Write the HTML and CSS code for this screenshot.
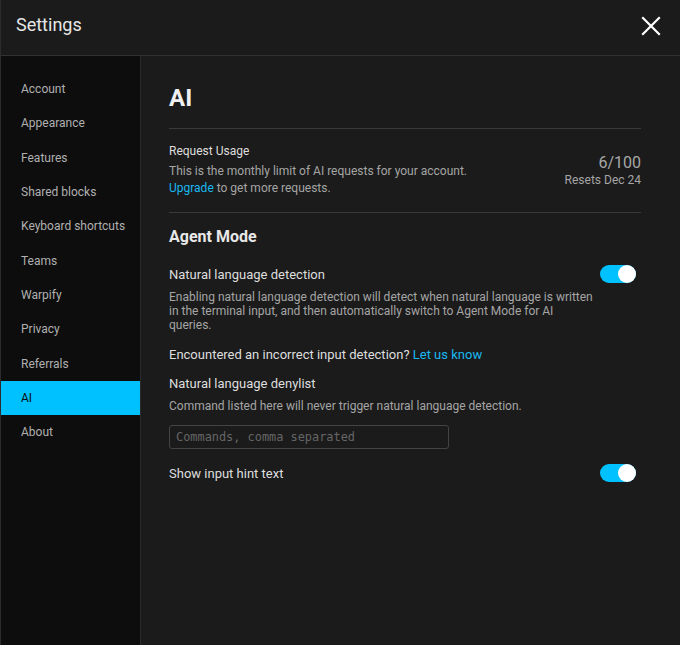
FILE: index.html
```html
<!DOCTYPE html>
<html>
<head>
<meta charset="utf-8">
<link rel="stylesheet" href="styles.css">
</head>
<body>
<div class="window">
  <header class="header">
    <div class="title">Settings</div>
    <svg class="close" width="20" height="20" viewBox="0 0 20 20"><path d="M2 2 L18 18 M18 2 L2 18" stroke="#fff" stroke-width="2.2" stroke-linecap="square"/></svg>
  </header>
  <div class="body">
    <nav class="sidebar">
      <div class="nav-item">Account</div>
      <div class="nav-item">Appearance</div>
      <div class="nav-item">Features</div>
      <div class="nav-item">Shared blocks</div>
      <div class="nav-item">Keyboard shortcuts</div>
      <div class="nav-item">Teams</div>
      <div class="nav-item">Warpify</div>
      <div class="nav-item">Privacy</div>
      <div class="nav-item">Referrals</div>
      <div class="nav-item active">AI</div>
      <div class="nav-item">About</div>
    </nav>
    <main class="content">
      <h1 class="page-title">AI</h1>
      <section class="usage">
        <div class="usage-left">
          <div class="label small-label">Request Usage</div>
          <div class="desc">This is the monthly limit of AI requests for your account.<br><span class="link">Upgrade</span> to get more requests.</div>
        </div>
        <div class="usage-right">
          <div class="count">6/100</div>
          <div class="resets">Resets Dec 24</div>
        </div>
      </section>
      <section class="agent">
        <h2 class="section-title">Agent Mode</h2>
        <div class="row">
          <div class="label">Natural language detection</div>
          <div class="toggle"><div class="knob"></div></div>
        </div>
        <div class="desc small wide">Enabling natural language detection will detect when natural language is written in the terminal input, and then automatically switch to Agent Mode for AI queries.</div>
        <div class="label encounter">Encountered an incorrect input detection? <span class="link">Let us know</span></div>
        <div class="label denylist">Natural language denylist</div>
        <div class="desc small">Command listed here will never trigger natural language detection.</div>
        <div class="input">Commands, comma separated</div>
        <div class="row hint">
          <div class="label">Show input hint text</div>
          <div class="toggle"><div class="knob"></div></div>
        </div>
      </section>
    </main>
  </div>
</div>
</body>
</html>
```

FILE: styles.css
```css
* { box-sizing: border-box; }
html, body { margin: 0; padding: 0; background: #1b1b1b; }
body {
  font-family: Roboto, "Liberation Sans", sans-serif;
  width: 680px;
  height: 645px;
  overflow: hidden;
}
.window {
  width: 680px;
  height: 645px;
  display: flex;
  flex-direction: column;
  background: #1b1b1b;
  border-left: 1px solid #2c2c2c;
}
.header {
  height: 56px;
  flex: none;
  display: flex;
  align-items: center;
  justify-content: space-between;
  padding: 0 19px 0 15px;
  border-bottom: 1px solid #323232;
}
.title {
  color: #e6e6e6;
  font-size: 18px;
  margin-top: -6px;
}
.close { display: block; margin-top: -3px; }
.body {
  flex: 1;
  display: flex;
  min-height: 0;
}
.sidebar {
  width: 140px;
  flex: none;
  background: #0d0d0d;
  border-right: 1px solid #2a2a2a;
  padding-top: 16px;
}
.nav-item {
  height: 34.3px;
  display: flex;
  align-items: center;
  padding-left: 20px;
  font-size: 12px;
  color: #b0b0b0;
}
.nav-item.active {
  background: #00c1ff;
  color: #0d0d0d;
}
.content {
  flex: 1;
  padding: 0 39px 0 28px;
}
.page-title {
  margin: 0;
  font-size: 24px;
  font-weight: 700;
  color: #f0f0f0;
  height: 73px;
  line-height: 30px;
  padding-top: 27px;
  border-bottom: 1px solid #3a3a3a;
}
.usage {
  display: flex;
  justify-content: space-between;
  align-items: center;
  padding: 14px 0 15px;
  border-bottom: 1px solid #3a3a3a;
}
.label {
  font-size: 13px;
  color: #dedede;
  line-height: 17px;
}
.label.small-label { font-size: 12px; }
.desc {
  font-size: 12px;
  color: #a5a5a5;
  line-height: 17px;
  margin-top: 3px;
}
.link { color: #19b8f0; }
.usage-right { text-align: right; margin-top: 2px; }
.count {
  font-size: 16px;
  color: #a8a8a8;
  line-height: 18px;
}
.resets {
  font-size: 12px;
  color: #a5a5a5;
  line-height: 16px;
}
.section-title {
  margin: 0;
  font-size: 16px;
  font-weight: 700;
  color: #e8e8e8;
  line-height: 20px;
  padding-top: 14px;
}
.row {
  display: flex;
  justify-content: space-between;
  align-items: center;
  margin-top: 18px;
  padding-right: 5px;
}
.desc.small {
  line-height: 14px;
  margin-top: 7px;
}
.desc.wide { padding-right: 45px; }
.toggle {
  width: 36px;
  height: 18px;
  border-radius: 9px;
  background: #00c1ff;
  position: relative;
}
.knob {
  position: absolute;
  right: 0;
  top: 0;
  width: 18px;
  height: 18px;
  border-radius: 50%;
  background: #fff;
}
.encounter { margin-top: 14px; }
.denylist { margin-top: 12px; }
.input {
  width: 280px;
  height: 24px;
  margin-top: 12px;
  border: 1px solid #444;
  border-radius: 3px;
  font-family: "DejaVu Sans Mono", monospace;
  font-size: 11.9px;
  color: #666;
  padding: 4px 6px;
  line-height: 14px;
}
.row.hint { margin-top: 15px; }
```
